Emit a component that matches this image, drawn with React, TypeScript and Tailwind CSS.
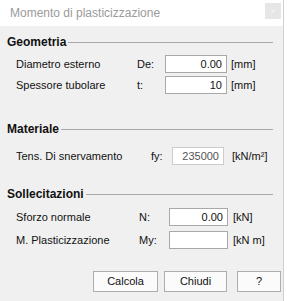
export default function App() {
  return (
    <div
      className="w-[287px] h-[301px] bg-white flex text-[11px] text-[#111]"
      style={{ fontFamily: '"Liberation Sans", Arial, sans-serif' }}
    >
      <div className="w-[284px] h-full flex flex-col border-r border-[#d0d0d0]">
        {/* title bar */}
        <div className="h-[26px] bg-white flex items-center justify-between pl-[10px] pr-[2px] shrink-0">
          <span className="text-[12px] text-[#9a9a9a]">Momento di plasticizzazione</span>
          <div className="w-[16px] h-[16px] bg-[#e6e6e6] flex items-center justify-center text-[10px] text-[#f4f4f4] mb-[4px]">
            ×
          </div>
        </div>

        <div className="flex-1 bg-[#f0f0f0] flex flex-col">
          <Section title="Geometria" className="mt-[9px]" />
          <div className="flex flex-col gap-[3px] mt-[6px]">
            <Row label="Diametro esterno" sym="De:" value="0.00" unit="[mm]" symX={137} inputX={165} inputW={62} unitGap={4} />
            <Row label="Spessore tubolare" sym="t:" value="10" unit="[mm]" symX={137} inputX={165} inputW={62} unitGap={4} />
          </div>

          <Section title="Materiale" className="mt-[28px]" />
          <div className="flex flex-col mt-[11px]">
            <Row label="Tens. Di snervamento" sym="fy:" value="235000" unit="[kN/m²]" symX={151} inputX={172} inputW={52} unitGap={8} muted />
          </div>

          <Section title="Sollecitazioni" className="mt-[22px]" />
          <div className="flex flex-col gap-[5px] mt-[7px]">
            <Row label="Sforzo normale" sym="N:" value="0.00" unit="[kN]" symX={139} inputX={169} inputW={59} unitGap={5} />
            <Row label="M. Plasticizzazione" sym="My:" value="" unit="[kN m]" symX={139} inputX={169} inputW={59} unitGap={5} />
          </div>

          <div className="flex mt-[22px] pl-[93px] gap-[6px]">
            <Btn label="Calcola" w={65} />
            <Btn label="Chiudi" w={63} />
            <Btn label="?" w={44} className="ml-[4px]" />
          </div>
        </div>
      </div>
    </div>
  );
}

function Section({ title, className = '' }: { title: string; className?: string }) {
  return (
    <div className={`flex items-center pl-[7px] pr-[10px] h-[14px] ${className}`}>
      <span className="font-bold text-[12px] text-[#111] leading-[14px]">{title}</span>
      <div className="flex-1 h-px bg-[#a8a8a8] ml-[2px]" />
    </div>
  );
}

function Row({
  label,
  sym,
  value,
  unit,
  symX,
  inputX,
  inputW,
  unitGap,
  muted = false,
}: {
  label: string;
  sym: string;
  value: string;
  unit: string;
  symX: number;
  inputX: number;
  inputW: number;
  unitGap: number;
  muted?: boolean;
}) {
  return (
    <div className="flex items-center h-[18px] pl-[16px]">
      <span style={{ width: symX - 16 }} className="shrink-0">{label}</span>
      <span style={{ width: inputX - symX }} className="shrink-0">{sym}</span>
      <div
        style={{ width: inputW }}
        className={`h-[18px] shrink-0 bg-white border flex items-center justify-end pr-[4px] ${
          muted ? 'border-[#cccccc] text-[#555]' : 'border-[#a8a8a8]'
        }`}
      >
        {value}
      </div>
      <span style={{ marginLeft: unitGap }}>{unit}</span>
    </div>
  );
}

function Btn({ label, w, className = '' }: { label: string; w: number; className?: string }) {
  return (
    <div
      style={{ width: w }}
      className={`h-[21px] bg-[#fbfbfb] border border-[#adadad] flex items-center justify-center ${className}`}
    >
      {label}
    </div>
  );
}
